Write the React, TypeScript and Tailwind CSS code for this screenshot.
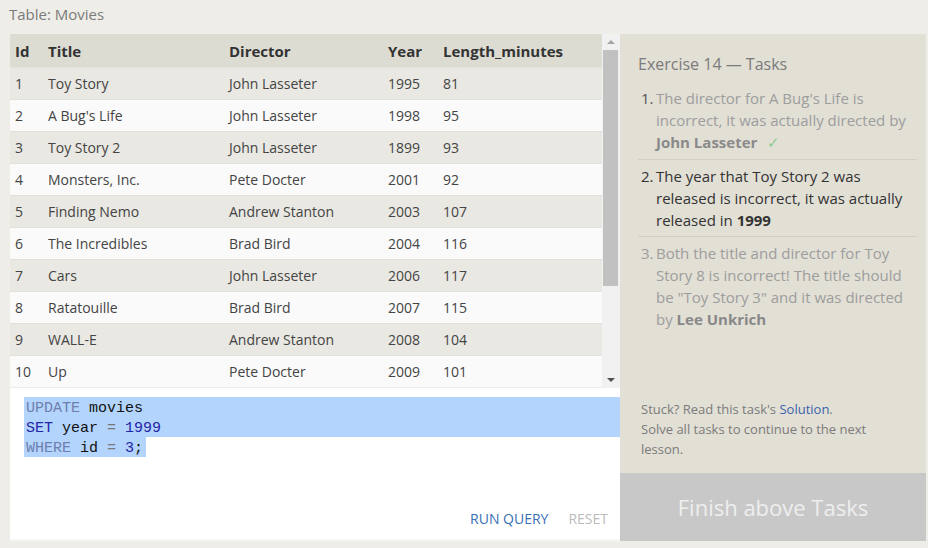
const rows = [
  [1, 'Toy Story', 'John Lasseter', 1995, 81],
  [2, "A Bug's Life", 'John Lasseter', 1998, 95],
  [3, 'Toy Story 2', 'John Lasseter', 1899, 93],
  [4, 'Monsters, Inc.', 'Pete Docter', 2001, 92],
  [5, 'Finding Nemo', 'Andrew Stanton', 2003, 107],
  [6, 'The Incredibles', 'Brad Bird', 2004, 116],
  [7, 'Cars', 'John Lasseter', 2006, 117],
  [8, 'Ratatouille', 'Brad Bird', 2007, 115],
  [9, 'WALL-E', 'Andrew Stanton', 2008, 104],
  [10, 'Up', 'Pete Docter', 2009, 101],
]

const cols = 'grid grid-cols-[33px_181px_159px_55px_164px]'

export default function App() {
  return (
    <div className="w-[928px] h-[548px] bg-[#efede8] font-['Open_Sans',sans-serif] overflow-hidden">
      <div className="h-[34px] pl-[9px] pt-[3px] text-[15px] text-[#7b7b7b]">Table: Movies</div>

      <div className="flex ml-[10px] w-[916px]">
        {/* left: table + editor */}
        <div className="w-[610px] flex flex-col">
          <div className="flex h-[354px]">
            <div className="w-[592px] text-[14px] text-[#444]">
              <div className={`${cols} h-[33px] pt-[2px] items-center bg-[#dddcd3] font-bold text-[15px] text-[#333]`}>
                <div className="pl-[5px]">Id</div>
                <div className="pl-[5px]">Title</div>
                <div className="pl-[5px]">Director</div>
                <div className="pl-[5px]">Year</div>
                <div className="pl-[5px]">Length_minutes</div>
              </div>
              {rows.map((r, i) => (
                <div
                  key={i}
                  className={`${cols} h-[32px] items-center border-t border-[#e2e1dc] ${i % 2 === 0 ? 'bg-[#e9e8e2]' : 'bg-[#fafafa]'}`}
                >
                  {r.map((c, j) => (
                    <div key={j} className="pl-[5px] whitespace-nowrap">{c}</div>
                  ))}
                </div>
              ))}
            </div>
            {/* scrollbar */}
            <div className="w-[17px] bg-[#f1f1f1] flex flex-col items-center">
              <div className="h-[16px] flex items-center justify-center">
                <div className="w-0 h-0 border-l-[4px] border-r-[4px] border-b-[4px] border-l-transparent border-r-transparent border-b-[#a3a3a3]" />
              </div>
              <div className="w-[15px] h-[236px] bg-[#c1c1c1]" />
              <div className="flex-1" />
              <div className="h-[16px] flex items-center justify-center">
                <div className="w-0 h-0 border-l-[4px] border-r-[4px] border-t-[4px] border-l-transparent border-r-transparent border-t-[#505050]" />
              </div>
            </div>
            <div className="w-px bg-[#f1f1f1]" />
          </div>

          {/* editor */}
          <div className="h-[153px] bg-white border-b-2 border-[#f7f7f5] flex flex-col">
            <div className="pt-[9px] pl-[14px] font-['Liberation_Mono',monospace] text-[15px] leading-[20px] text-[#111]">
              <div className="bg-[#b3d4fc] pl-[2px] pt-[2px] h-[20px]">
                <span className="text-[#6e7fae]">UPDATE</span> movies
              </div>
              <div className="bg-[#b3d4fc] pl-[2px] pt-[2px] h-[20px]">
                <span className="text-[#2525a8]">SET</span> year <span className="text-[#777]">=</span>{' '}
                <span className="text-[#2525a8]">1999</span>
              </div>
              <div className="bg-[#b3d4fc] pl-[2px] pt-[2px] h-[20px] w-[122px]">
                <span className="text-[#6e7fae]">WHERE</span> id <span className="text-[#777]">=</span>{' '}
                <span className="text-[#2525a8]">3</span>;
              </div>
            </div>
            <div className="flex-1" />
            <div className="flex justify-end gap-[20px] pr-[12px] pb-[10px] text-[14px]">
              <span className="text-[#3a70b4]">RUN QUERY</span>
              <span className="text-[#bbbbbb]">RESET</span>
            </div>
          </div>
        </div>

        {/* right: tasks */}
        <div className="w-[306px] bg-[#e2dfd5] flex flex-col h-[507px]">
          <div className="pl-[18px] pr-[9px] flex-1">
            <div className="pt-[18px] text-[16px] text-[#7b7b7b]">Exercise 14 — Tasks</div>
            <div className="mt-[11px] text-[15px] leading-[22px]">
              <div className="flex pb-[6px] border-b border-[#d2d0c6]">
                <span className="w-[18px] pl-[3px] text-[#555]">1.</span>
                <span className="flex-1 text-[#9d9d9d]">
                  The director for A Bug's Life is incorrect, it was actually directed by{' '}
                  <b className="text-[#8a8a8a]">John Lasseter</b>
                  <span className="ml-[10px] text-[#8fc98f]">✓</span>
                </span>
              </div>
              <div className="flex pt-[5px] pb-[5px] border-b border-[#d2d0c6]">
                <span className="w-[18px] pl-[3px] text-[#333]">2.</span>
                <span className="flex-1 text-[#333]">
                  The year that Toy Story 2 was released is incorrect, it was actually released in <b>1999</b>
                </span>
              </div>
              <div className="flex pt-[5px]">
                <span className="w-[18px] pl-[3px] text-[#9d9d9d]">3.</span>
                <span className="flex-1 text-[#9d9d9d]">
                  Both the title and director for Toy Story 8 is incorrect! The title should be "Toy Story 3" and it was directed by{' '}
                  <b className="text-[#888]">Lee Unkrich</b>
                </span>
              </div>
            </div>
          </div>
          <div className="pl-[21px] pr-[40px] pb-[14px] text-[13px] leading-[20px] text-[#7b7b7b]">
            Stuck? Read this task's <span className="text-[#3a63ad]">Solution</span>.
            <br />
            Solve all tasks to continue to the next lesson.
          </div>
          <div className="h-[68px] bg-[#c8c8c8] flex items-center justify-center text-[22px] text-[#eeeeee]">
            Finish above Tasks
          </div>
        </div>
      </div>
    </div>
  )
}
